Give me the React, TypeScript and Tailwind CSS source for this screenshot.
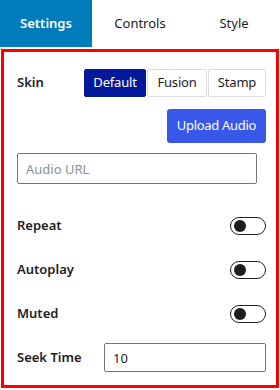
import { useState } from "react";

const font = { fontFamily: '"Noto Sans", "Open Sans", sans-serif' };

const skins = [
  { name: "Default", w: "w-[62px]" },
  { name: "Fusion", w: "w-[60px]" },
  { name: "Stamp", w: "w-[58px]" },
];

function Toggle({ on, onChange }: { on: boolean; onChange: () => void }) {
  return (
    <button
      onClick={onChange}
      className={`relative h-[18px] w-[36px] rounded-full border border-[#1e1e1e] ${on ? "bg-[#007cba] border-[#007cba]" : "bg-white"}`}
    >
      <span
        className={`absolute top-[2px] h-[12px] w-[12px] rounded-full ${on ? "left-[20px] bg-white" : "left-[3px] bg-[#1e1e1e]"}`}
      />
    </button>
  );
}

export default function App() {
  const [tab, setTab] = useState("Settings");
  const [skin, setSkin] = useState("Default");
  const [flags, setFlags] = useState<Record<string, boolean>>({ Repeat: false, Autoplay: false, Muted: false });

  return (
    <div className="w-[280px] h-[390px] bg-white text-[13px] text-[#1e1e1e]" style={font}>
      {/* Tabs */}
      <div className="grid grid-cols-[92px_96px_92px] h-[47px]">
        {["Settings", "Controls", "Style"].map(t => (
          <button
            key={t}
            onClick={() => setTab(t)}
            className={`flex items-center justify-center text-[13px] ${tab === t ? "bg-[#007cba] text-white font-semibold" : "text-[#1e1e1e]"}`}
          >
            {t}
          </button>
        ))}
      </div>

      <div className="mt-[2px] mx-[1px] h-[339px] border-[3px] border-[#ff0000] pt-[17px] pl-[13px] pr-[10px]">
        {/* Skin */}
        <div className="flex items-center justify-between">
          <span className="font-semibold">Skin</span>
          <div className="flex gap-px">
            {skins.map(({ name, w }) => (
              <button
                key={name}
                onClick={() => setSkin(name)}
                className={`h-[28px] ${w} border rounded-[2px] tracking-[-0.2px] ${skin === name ? "bg-[#04189b] border-[#04189b] text-white" : "bg-white border-[#dcdcde] text-[#1e1e1e]"}`}
              >
                {name}
              </button>
            ))}
          </div>
        </div>

        <div className="flex justify-end mt-[12px]">
          <button className="h-[34px] w-[99px] rounded-[3px] bg-[#3858e9] text-white tracking-[-0.3px]">Upload Audio</button>
        </div>

        <input
          placeholder="Audio URL"
          className="mt-[10px] block h-[31px] w-[240px] rounded-[2px] border border-[#757575] px-[8px] placeholder:text-[#8c8f94] outline-none"
        />

        {["Repeat", "Autoplay", "Muted"].map((k, i) => (
          <div key={k} className={`flex items-center justify-between h-[18px] ${i === 0 ? "mt-[33px]" : "mt-[26px]"}`}>
            <span className="font-semibold">{k}</span>
            <Toggle on={flags[k]} onChange={() => setFlags(f => ({ ...f, [k]: !f[k] }))} />
          </div>
        ))}

        <div className="flex items-center justify-between mt-[20px]">
          <span className="font-semibold">Seek Time</span>
          <input
            defaultValue="10"
            className="h-[29px] w-[162px] rounded-[2px] border border-[#757575] px-[8px] outline-none"
          />
        </div>
      </div>
    </div>
  );
}
